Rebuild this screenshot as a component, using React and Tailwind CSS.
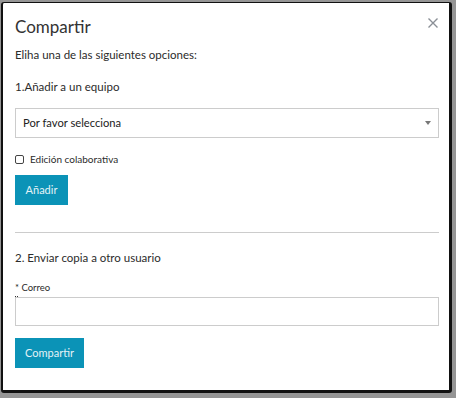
export default function App() {
  return (
    <div className="w-[456px] h-[398px] bg-[#959595] pt-[2px] pl-[1px] overflow-hidden" style={{ fontFamily: 'Lato, "Open Sans", sans-serif' }}>
      <div className="w-[451px] h-[391px] bg-white border-l-2 border-t border-r-[3px] border-b-[3px] border-[#111] rounded-[3px] pt-[12px] pl-[12px] pr-[10px] text-[#2b2b2b] flex flex-col">
        <div className="flex justify-between items-start h-[24px]">
          <h2 className="text-[17px] leading-[24px] font-normal text-[#333]">Compartir</h2>
          <svg width="10" height="10" viewBox="0 0 10 10" className="mt-[3px] mr-[1px]">
            <path d="M0.5 0.5L9.5 9.5M9.5 0.5L0.5 9.5" stroke="#8a8f96" strokeWidth="1.4" />
          </svg>
        </div>
        <p className="mt-[7px] text-[11.5px] leading-[18px]">Eliha una de las siguientes opciones:</p>
        <p className="mt-[14px] text-[11.5px] leading-[18px]">1.Añadir a un equipo</p>
        <div className="mt-[12px] h-[30px] border border-[#ccc] flex items-center justify-between pl-[7px] pr-[7px]">
          <span className="text-[11.2px] text-[#222]">Por favor selecciona</span>
          <span className="w-0 h-0 border-l-[3px] border-r-[3px] border-t-[4px] border-l-transparent border-r-transparent border-t-[#777]" />
        </div>
        <label className="mt-[14px] h-[14px] flex items-center gap-[6px] text-[10px] leading-[14px]">
          <span className="w-[9px] h-[9px] border border-[#444] rounded-[2px]" />
          Edición colaborativa
        </label>
        <button className="mt-[9px] h-[30px] w-[53px] bg-[#0b93b7] text-[#e3f2f6] text-[11px]">Añadir</button>
        <div className="mt-[27px] h-px bg-[#ccc]" />
        <p className="mt-[16px] text-[11.5px] leading-[18px]">2. Enviar copia a otro usuario</p>
        <p className="mt-[15px] text-[9.5px] leading-[12px]">* Correo</p>
        <div className="mt-[2px] h-px w-[3px] border-t border-dotted border-[#333]" />
        <div className="h-[29px] border border-[#ccc]" />
        <button className="mt-[12px] h-[30px] w-[69px] bg-[#0b93b7] text-[#e3f2f6] text-[11px]">Compartir</button>
      </div>
    </div>
  );
}
